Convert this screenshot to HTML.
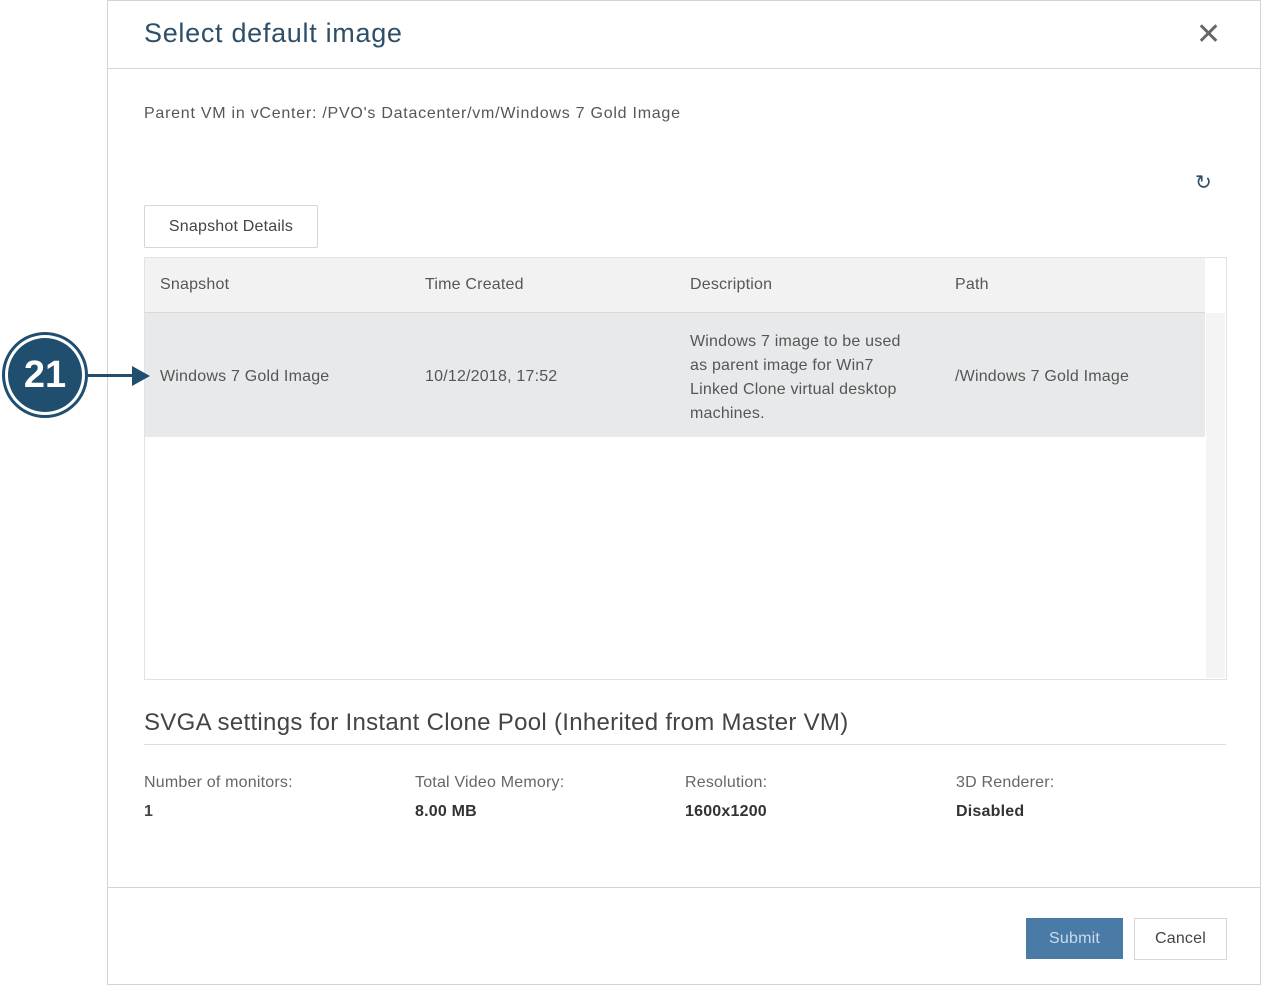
<!DOCTYPE html>
<html><head><style>
body{margin:0;width:1261px;height:985px;background:#fff;font-family:"Liberation Sans",sans-serif;position:relative;overflow:hidden;color:#565656}
.a{position:absolute}
.dlg{left:107px;top:0;width:1152px;height:983px;border:1px solid #d8d4cc}
.t{font-size:16px;color:#565656;letter-spacing:0.2px}
</style></head><body>
<div class="a dlg"></div>
<div class="a" style="left:144px;top:18px;font-size:27px;letter-spacing:0.7px;color:#2f4f68">Select default image</div>
<div class="a" style="left:1196px;top:20px;font-size:30px;color:#666;line-height:30px">✕</div>
<div class="a" style="left:108px;top:68px;width:1152px;border-top:1px solid #d6d6d6"></div>
<div class="a t" style="left:144px;top:105px;letter-spacing:0.75px">Parent VM in vCenter: /PVO's Datacenter/vm/Windows 7 Gold Image</div>
<div class="a" style="left:1195px;top:170px;font-size:20px;color:#2f4f68">↻</div>
<div class="a t" style="left:144px;top:205px;width:172px;height:41px;border:1px solid #d6d6d6;border-radius:2px;line-height:41px;text-align:center;color:#444">Snapshot Details</div>
<div class="a" style="left:144px;top:257px;width:1081px;height:421px;border:1px solid #e2e2e2"></div>
<div class="a" style="left:145px;top:258px;width:1060px;height:54px;background:#f2f2f2;border-bottom:1px solid #d8d8d8"></div>
<div class="a t" style="left:160px;top:276px">Snapshot</div>
<div class="a t" style="left:425px;top:276px">Time Created</div>
<div class="a t" style="left:690px;top:276px">Description</div>
<div class="a t" style="left:955px;top:276px">Path</div>
<div class="a" style="left:145px;top:313px;width:1060px;height:124px;background:#e8e9ea"></div>
<div class="a" style="left:1206px;top:313px;width:19px;height:365px;background:#f4f4f4"></div>
<div class="a t" style="left:160px;top:368px">Windows 7 Gold Image</div>
<div class="a t" style="left:425px;top:368px">10/12/2018, 17:52</div>
<div class="a t" style="left:690px;top:330px;line-height:24px;width:232px">Windows 7 image to be used as parent image for Win7 Linked Clone virtual desktop machines.</div>
<div class="a t" style="left:955px;top:368px">/Windows 7 Gold Image</div>
<div class="a" style="left:144px;top:709px;font-size:24px;letter-spacing:0.3px;color:#444">SVGA settings for Instant Clone Pool (Inherited from Master VM)</div>
<div class="a" style="left:144px;top:744px;width:1082px;border-top:1px solid #ddd"></div>
<div class="a t" style="left:144px;top:774px;color:#666">Number of monitors:</div>
<div class="a t" style="left:415px;top:774px;color:#666">Total Video Memory:</div>
<div class="a t" style="left:685px;top:774px;color:#666">Resolution:</div>
<div class="a t" style="left:956px;top:774px;color:#666">3D Renderer:</div>
<div class="a t" style="left:144px;top:803px;font-weight:bold;color:#444">1</div>
<div class="a t" style="left:415px;top:803px;color:#333;font-weight:bold">8.00 MB</div>
<div class="a t" style="left:685px;top:803px;color:#333;font-weight:bold">1600x1200</div>
<div class="a t" style="left:956px;top:803px;color:#333;font-weight:bold">Disabled</div>
<div class="a" style="left:108px;top:887px;width:1152px;border-top:1px solid #d8d4cc"></div>
<div class="a t" style="left:1026px;top:918px;width:97px;height:41px;background:#4a7ba6;line-height:41px;text-align:center;color:#c8dcee">Submit</div>
<div class="a t" style="left:1134px;top:918px;width:91px;height:40px;border:1px solid #d6d6d6;line-height:40px;text-align:center;color:#444">Cancel</div>
<div class="a" style="left:2px;top:332px;width:86px;height:86px;border-radius:50%;border:3px solid #1f4e6e;background:#fff;box-sizing:border-box"></div>
<div class="a" style="left:8px;top:338px;width:74px;height:74px;border-radius:50%;background:#1f4e6e;color:#fff;font-size:38px;font-weight:bold;line-height:74px;text-align:center">21</div>
<div class="a" style="left:88px;top:374px;width:46px;height:3px;background:#1f4e6e"></div>
<div class="a" style="left:132px;top:366px;width:0;height:0;border-left:18px solid #1f4e6e;border-top:10px solid transparent;border-bottom:10px solid transparent"></div>
</body></html>
